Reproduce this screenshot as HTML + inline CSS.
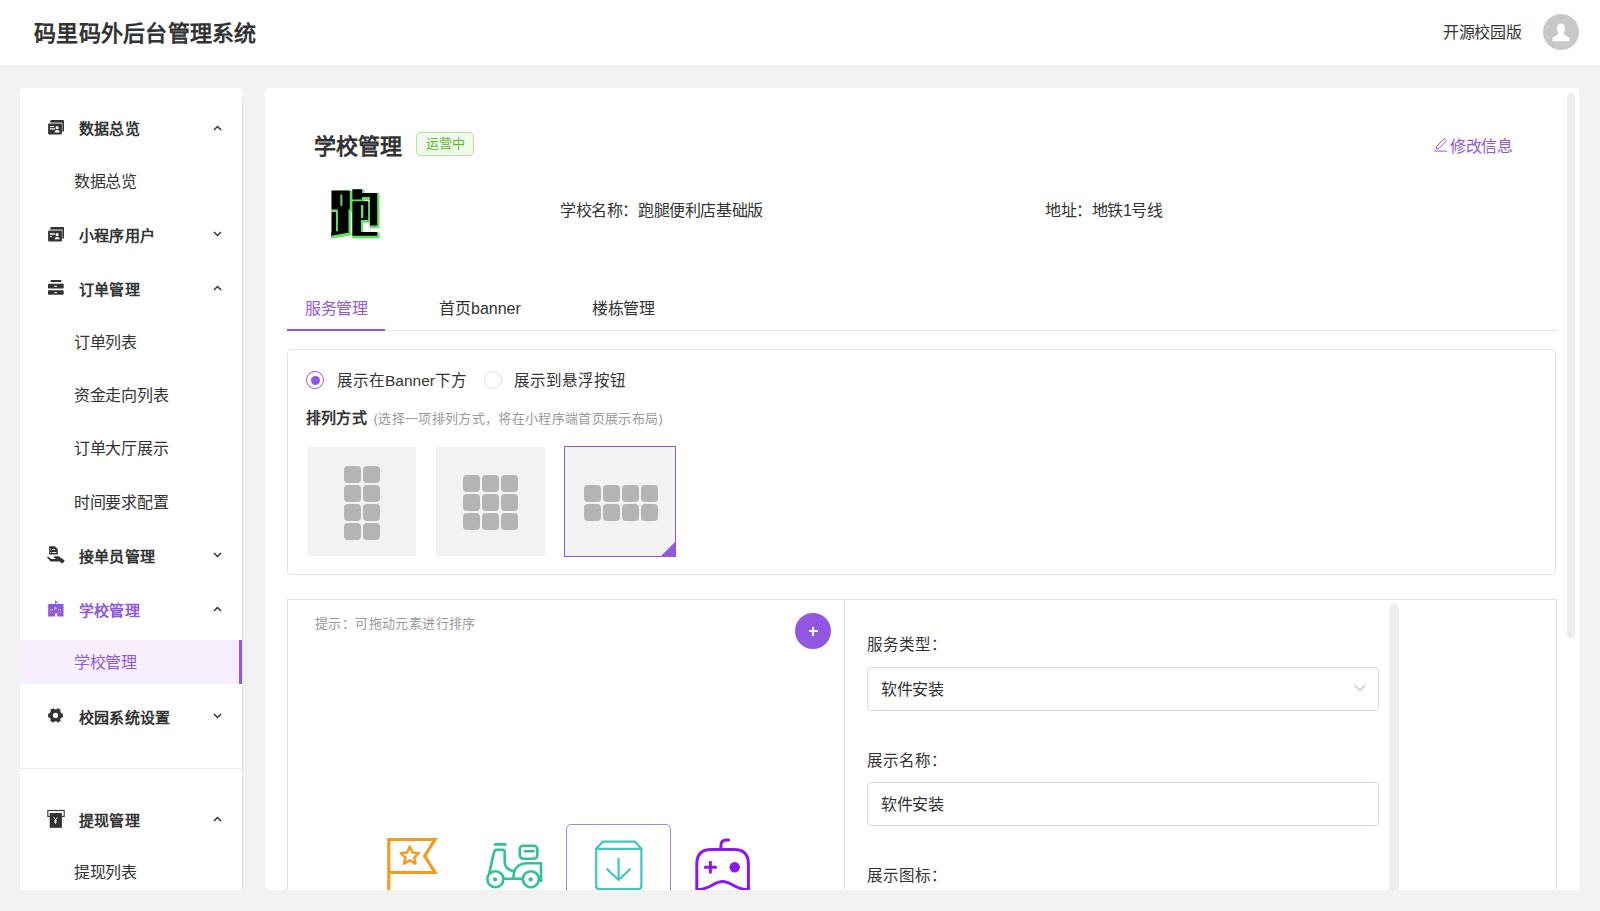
<!DOCTYPE html>
<html lang="zh-CN"><head><meta charset="utf-8">
<style>
*{box-sizing:border-box;margin:0;padding:0}
html,body{width:1600px;height:911px;overflow:hidden}
body{background:#f2f2f2;font-family:"Liberation Sans",sans-serif;color:#333;position:relative}
.a{position:absolute;white-space:nowrap}
#hdr{left:0;top:0;width:1600px;height:65px;background:#fff;box-shadow:0 1px 2px rgba(0,0,0,.02)}
#side{left:20px;top:87px;width:222px;height:803px;overflow:hidden}
.cbg{left:0;top:1px;right:0;bottom:0;background:#fff}
#main{left:265px;top:87px;width:1314px;height:803px;overflow:hidden;border-radius:0 0 4px 4px}
.mh{font-size:15px;letter-spacing:.2px;line-height:20px;font-weight:bold;color:#333}
.ms{font-size:16px;letter-spacing:-.3px;line-height:20px;color:#333}
.pur{color:#9157e0}
.chev{width:9px;height:6px}
.ic{width:24px;height:24px}
.info{font-size:16px;letter-spacing:-.4px;line-height:20px;color:#333}
.opt{width:109px;height:109px;background:#f2f2f2}
.opt.sel{width:112px;height:111px;border:1px solid #9157e0}
.sq{width:17px;height:17px;border-radius:4px;background:#b4b4b4}
.tri{right:-1px;bottom:-1px;width:0;height:0;border-style:solid;border-width:0 0 16px 16px;border-color:transparent transparent #9157e0 transparent}
.logo{font-size:56px;line-height:70px;font-weight:900;color:#000;text-shadow:-2px 2px 0 #5ee05e}
.lbl{font-size:15.5px;line-height:20px;color:#333}
.inp{width:512px;height:44px;border:1px solid #dcdcdc;border-radius:4px;padding-left:13px;font-size:16px;letter-spacing:-.3px;line-height:44px;color:#333}
</style></head><body>

<!-- header -->
<div class="a" id="hdr">
  <div class="a" style="left:34px;top:19px;font-size:22px;line-height:30px;font-weight:bold;color:#333;letter-spacing:.25px">码里码外后台管理系统</div>
  <div class="a" style="left:1443px;top:23px;font-size:16px;line-height:20px;color:#333;letter-spacing:-.3px">开源校园版</div>
  <svg class="a" style="left:1543px;top:14px" width="36" height="36" viewBox="0 0 36 36">
    <circle cx="18" cy="18" r="18" fill="#c8c8c8"/>
    <path d="M18 9.6c2.3 0 4.2 2 4.2 4.7 0 1.9-.8 3.5-1.7 4.6v.9l5.6 3.6c.3.3.5.7.5 1.1v2.7H9.4v-2.7c0-.4.2-.8.5-1.1l5.6-3.6v-.9c-.9-1.1-1.7-2.7-1.7-4.6 0-2.7 1.9-4.7 4.2-4.7z" fill="#fff"/>
  </svg>
</div>

<!-- sidebar -->
<div class="a" style="left:242px;top:99px;width:1px;height:791px;background:#e6e6e6"></div><div class="a" style="left:243px;top:99px;width:1px;height:791px;background:#ededed"></div>
<div class="a" id="side">
  <div class="a cbg" style="border-radius:4px 4px 0 0"></div>
  <!-- 数据总览 -->
  <svg class="a ic" style="left:24px;top:29px" viewBox="0 0 24 24">
    <rect x="6.3" y="4" width="13.7" height="11.8" rx="1" fill="#333"/>
    <rect x="3" y="6.6" width="15.4" height="13" fill="#fff"/>
    <rect x="4.1" y="7.6" width="13.8" height="11" rx="1" fill="#333"/>
    <rect x="5.9" y="10.1" width="4.2" height="1" fill="#fff"/>
    <rect x="5.9" y="12" width="4.9" height="1.7" fill="#fff" opacity=".75"/>
    <circle cx="13.1" cy="11.7" r="1.6" fill="#fff"/>
    <path d="M10.5 16.4c.3-1.5 1.2-2.3 2.6-2.3s2.3.8 2.7 2.3z" fill="#fff"/>
  </svg>
  <div class="a mh" style="left:59px;top:32px">数据总览</div>
  <svg class="a chev" style="left:193px;top:38px" viewBox="0 0 9 6"><path d="M1 5L4.5 1.5 8 5" fill="none" stroke="#333" stroke-width="1.5"/></svg>
  <div class="a ms" style="left:54px;top:85px">数据总览</div>

  <!-- 小程序用户 -->
  <svg class="a ic" style="left:24px;top:135px" viewBox="0 0 24 24">
    <rect x="6.3" y="5" width="13.7" height="11.8" rx="1" fill="#333"/>
    <rect x="3" y="7.6" width="15.4" height="13" fill="#fff"/>
    <rect x="4.1" y="8.6" width="13.8" height="11" rx="1" fill="#333"/>
    <rect x="5.9" y="11" width="4.9" height="2" fill="#fff" opacity=".75"/>
    <rect x="5.9" y="14" width="2" height="1" fill="#fff"/>
    <circle cx="13.1" cy="12.6" r="1.6" fill="#fff"/>
    <path d="M10.5 17.3c.3-1.5 1.2-2.3 2.6-2.3s2.3.8 2.7 2.3z" fill="#fff"/>
  </svg>
  <div class="a mh" style="left:59px;top:139px">小程序用户</div>
  <svg class="a chev" style="left:193px;top:144px" viewBox="0 0 9 6"><path d="M1 1L4.5 4.5 8 1" fill="none" stroke="#333" stroke-width="1.5"/></svg>

  <!-- 订单管理 -->
  <svg class="a ic" style="left:24px;top:190px" viewBox="0 0 24 24">
    <path d="M7 3h10l.6 1.9H6.2z" fill="#333"/>
    <rect x="4" y="6.8" width="15.7" height="4.8" rx="1" fill="#333"/>
    <rect x="10.2" y="8.8" width="2.8" height="1" fill="#fff"/>
    <rect x="4" y="13.2" width="15.7" height="4.6" rx="1" fill="#333"/>
    <rect x="10.2" y="15.2" width="2.8" height="1" fill="#fff"/>
  </svg>
  <div class="a mh" style="left:59px;top:193px">订单管理</div>
  <svg class="a chev" style="left:193px;top:198px" viewBox="0 0 9 6"><path d="M1 5L4.5 1.5 8 5" fill="none" stroke="#333" stroke-width="1.5"/></svg>
  <div class="a ms" style="left:54px;top:246px">订单列表</div>
  <div class="a ms" style="left:54px;top:299px">资金走向列表</div>
  <div class="a ms" style="left:54px;top:352px">订单大厅展示</div>
  <div class="a ms" style="left:54px;top:406px">时间要求配置</div>

  <!-- 接单员管理 -->
  <svg class="a ic" style="left:24px;top:456px" viewBox="0 0 24 24">
    <path d="M5.2 3.2h5.6l3 3v5.4H5.2z" fill="#333"/>
    <rect x="6.3" y="6" width=".9" height=".9" fill="#fff"/>
    <rect x="8" y="6" width="3" height=".9" fill="#fff"/>
    <rect x="6.3" y="9" width=".9" height=".9" fill="#fff"/>
    <rect x="8" y="9" width="4.3" height=".9" fill="#fff"/>
    <path d="M3 14.3l1-.9 3.2 2.7h5.2l-2.6-1.5.6-1.4h4.3l6 4.2-2 3-3.4-2H6.5z" fill="#333"/>
  </svg>
  <div class="a mh" style="left:59px;top:460px">接单员管理</div>
  <svg class="a chev" style="left:193px;top:465px" viewBox="0 0 9 6"><path d="M1 1L4.5 4.5 8 1" fill="none" stroke="#333" stroke-width="1.5"/></svg>

  <!-- 学校管理 -->
  <svg class="a ic" style="left:24px;top:510px" viewBox="0 0 24 24">
    <path d="M11.1 3.4h.8v.9l3 .8-3 .9v1.1h7.6v2.5l.4 1.2h-.4V19l.4.6h-6.7V17.2q0-1.2-1.05-1.2t-1.05 1.2v2.4H3.3l.9-.6V10.8h-.9l.9-1.2V7.1h6.9z" fill="#9157e0"/>
    <circle cx="11.4" cy="11.3" r="1.2" fill="#fff" opacity=".6"/>
    <g fill="#fff" opacity=".75">
      <rect x="6.3" y="12.1" width=".8" height="1.6"/><rect x="8.2" y="12.1" width=".8" height="1.6"/>
      <rect x="14.2" y="12.1" width=".8" height="1.6"/><rect x="16.1" y="12.1" width=".8" height="1.6"/>
      <rect x="6.3" y="15" width=".8" height=".8"/><rect x="8.2" y="15" width=".8" height=".8"/>
      <rect x="14.2" y="15" width=".8" height=".8"/><rect x="16.1" y="15" width=".8" height=".8"/>
    </g>
  </svg>
  <div class="a mh pur" style="left:59px;top:514px">学校管理</div>
  <svg class="a chev" style="left:193px;top:519px" viewBox="0 0 9 6"><path d="M1 5L4.5 1.5 8 5" fill="none" stroke="#333" stroke-width="1.5"/></svg>
  <div class="a" style="left:0;top:553px;width:222px;height:44px;background:#f7effd"></div>
  <div class="a" style="left:219px;top:553px;width:3px;height:44px;background:#9157e0"></div>
  <div class="a ms pur" style="left:54px;top:566px">学校管理</div>

  <!-- 校园系统设置 -->
  <svg class="a ic" style="left:24px;top:617px" viewBox="0 0 24 24"><g fill="#333"><rect x="15.70" y="9.4" width="3.2" height="4" rx=".6" transform="rotate(0 11.5 11.4)"/><rect x="15.70" y="9.4" width="3.2" height="4" rx=".6" transform="rotate(60 11.5 11.4)"/><rect x="15.70" y="9.4" width="3.2" height="4" rx=".6" transform="rotate(120 11.5 11.4)"/><rect x="15.70" y="9.4" width="3.2" height="4" rx=".6" transform="rotate(180 11.5 11.4)"/><rect x="15.70" y="9.4" width="3.2" height="4" rx=".6" transform="rotate(240 11.5 11.4)"/><rect x="15.70" y="9.4" width="3.2" height="4" rx=".6" transform="rotate(300 11.5 11.4)"/><circle cx="11.5" cy="11.4" r="6.2"/></g><circle cx="11.5" cy="11.4" r="2.6" fill="#fff"/></svg>
  <div class="a mh" style="left:59px;top:621px">校园系统设置</div>
  <svg class="a chev" style="left:193px;top:626px" viewBox="0 0 9 6"><path d="M1 1L4.5 4.5 8 1" fill="none" stroke="#333" stroke-width="1.5"/></svg>

  <div class="a" style="left:0;top:681px;width:222px;height:1px;background:#ebebeb"></div>

  <!-- 提现管理 -->
  <svg class="a ic" style="left:24px;top:719px" viewBox="0 0 24 24">
    <rect x="3.8" y="4.5" width="16.4" height="5.9" fill="none" stroke="#333" stroke-width="1.1"/>
    <rect x="5.7" y="7" width="12.2" height="14.8" fill="#333"/>
    <path d="M9.6 11.2l1.9 2.6 1.9-2.6M11.5 13.8v4M10 14.6h3M10 16.1h3" fill="none" stroke="#fff" stroke-width=".8"/>
  </svg>
  <div class="a mh" style="left:59px;top:724px">提现管理</div>
  <svg class="a chev" style="left:193px;top:729px" viewBox="0 0 9 6"><path d="M1 5L4.5 1.5 8 5" fill="none" stroke="#333" stroke-width="1.5"/></svg>
  <div class="a ms" style="left:54px;top:776px">提现列表</div>
</div>

<!-- main -->
<div class="a" id="main">
  <div class="a cbg" style="border-radius:4px"></div>
  <div class="a" style="left:49px;top:45px;font-size:22px;line-height:30px;font-weight:bold;color:#333">学校管理</div>
  <div class="a" style="left:151px;top:45px;width:58px;height:24px;border:1px solid #b9e3a5;background:#f0f9eb;border-radius:4px;color:#5fb92f;font-size:13px;line-height:22px;text-align:center">运营中</div>
  <svg class="a" style="left:55px;top:93px" width="70" height="70" viewBox="0 0 70 70">
    <path d="M11.60 10.60H29.80V29.40H11.60ZM17.90 29.40H28.50V52.60H17.90ZM11.60 31.90 L16.00 31.90 L16.00 53.80 L11.60 54.73ZM11.60 51.27 L28.50 51.27 L29.20 52.60 L10.99 55.70ZM32.40 9.20H42.10V19.50H32.40ZM42.10 12.90H57.20V17.10H42.10ZM49.90 12.90H57.20V45.50H49.90ZM32.40 21.30H40.90V55.70H32.40ZM32.40 21.30H48.10V25.00H32.40ZM43.30 21.30H48.10V40.00H43.30ZM40.90 37.90H48.10V40.00H40.90ZM32.40 52.10H57.20V55.70H32.40Z" fill="#62e462" stroke="#62e462" stroke-width="2.6" stroke-linejoin="round" transform="translate(1 1.5)"/>
    <path d="M11.60 10.60H29.80V29.40H11.60ZM17.90 29.40H28.50V52.60H17.90ZM11.60 31.90 L16.00 31.90 L16.00 53.80 L11.60 54.73ZM11.60 51.27 L28.50 51.27 L29.20 52.60 L10.99 55.70ZM32.40 9.20H42.10V19.50H32.40ZM42.10 12.90H57.20V17.10H42.10ZM49.90 12.90H57.20V45.50H49.90ZM32.40 21.30H40.90V55.70H32.40ZM32.40 21.30H48.10V25.00H32.40ZM43.30 21.30H48.10V40.00H43.30ZM40.90 37.90H48.10V40.00H40.90ZM32.40 52.10H57.20V55.70H32.40Z" fill="#000"/>
    <path d="M20.40 14.40H22.30V25.70H20.40Z" fill="#62e462"/>
  </svg>
  <div class="a info" style="left:295px;top:114px">学校名称：跑腿便利店基础版</div>
  <div class="a info" style="left:780px;top:114px">地址：地铁1号线</div>
  <svg class="a" style="left:1168px;top:50px" width="16" height="16" viewBox="0 0 16 16">
    <path d="M3 12.2l.6-2.8 7.2-7.2a.9.9 0 0 1 1.3 0l.9.9a.9.9 0 0 1 0 1.3L5.8 11.6z" fill="none" stroke="#9157e0" stroke-width="1"/>
    <rect x="1.5" y="13.6" width="12.6" height="1" fill="#9157e0"/>
  </svg>
  <div class="a pur" style="left:1185px;top:50px;font-size:16px;line-height:20px;letter-spacing:-.3px">修改信息</div>

  <div class="a pur" style="left:40px;top:212px;font-size:16px;line-height:20px;letter-spacing:-.3px">服务管理</div>
  <div class="a" style="left:174px;top:212px;font-size:16px;line-height:20px;color:#333">首页banner</div>
  <div class="a" style="left:327px;top:212px;font-size:16px;line-height:20px;color:#333;letter-spacing:-.3px">楼栋管理</div>
  <div class="a" style="left:22px;top:243px;width:1270px;height:1px;background:#e4e7ed"></div>
  <div class="a" style="left:22px;top:242px;width:98px;height:2px;background:#9157e0"></div>

  <div class="a" style="left:22px;top:262px;width:1269px;height:226px;border:1px solid #e4e4e4;border-radius:4px"></div>
  <div class="a" style="left:41px;top:284px;width:18px;height:18px;border:1px solid #9157e0;border-radius:50%"></div>
  <div class="a" style="left:45.5px;top:288.5px;width:9px;height:9px;background:#9157e0;border-radius:50%"></div>
  <div class="a" style="left:72px;top:284px;font-size:15.5px;line-height:20px;color:#333">展示在Banner下方</div>
  <div class="a" style="left:219px;top:284px;width:18px;height:18px;border:1px solid #dcdfe6;border-radius:50%"></div>
  <div class="a" style="left:249px;top:284px;font-size:15.5px;line-height:20px;color:#333">展示到悬浮按钮</div>
  <div class="a" style="left:41px;top:321px;font-size:15px;letter-spacing:.2px;line-height:20px;font-weight:bold;color:#333">排列方式</div>
  <div class="a" style="left:108.5px;top:322px;font-size:13px;letter-spacing:.35px;line-height:20px;color:#999">(选择一项排列方式，将在小程序端首页展示布局)</div>
  <div class="a opt" style="left:42px;top:360px"><div class="a sq" style="left:36.5px;top:19.0px"></div><div class="a sq" style="left:55.5px;top:19.0px"></div><div class="a sq" style="left:36.5px;top:38.0px"></div><div class="a sq" style="left:55.5px;top:38.0px"></div><div class="a sq" style="left:36.5px;top:57.0px"></div><div class="a sq" style="left:55.5px;top:57.0px"></div><div class="a sq" style="left:36.5px;top:76.0px"></div><div class="a sq" style="left:55.5px;top:76.0px"></div></div>
  <div class="a opt" style="left:171px;top:360px"><div class="a sq" style="left:27.0px;top:27.5px"></div><div class="a sq" style="left:46.0px;top:27.5px"></div><div class="a sq" style="left:65.0px;top:27.5px"></div><div class="a sq" style="left:27.0px;top:46.5px"></div><div class="a sq" style="left:46.0px;top:46.5px"></div><div class="a sq" style="left:65.0px;top:46.5px"></div><div class="a sq" style="left:27.0px;top:65.5px"></div><div class="a sq" style="left:46.0px;top:65.5px"></div><div class="a sq" style="left:65.0px;top:65.5px"></div></div>
  <div class="a opt sel" style="left:299px;top:359px"><div class="a sq" style="left:18.5px;top:38.0px"></div><div class="a sq" style="left:37.5px;top:38.0px"></div><div class="a sq" style="left:56.5px;top:38.0px"></div><div class="a sq" style="left:75.5px;top:38.0px"></div><div class="a sq" style="left:18.5px;top:57.0px"></div><div class="a sq" style="left:37.5px;top:57.0px"></div><div class="a sq" style="left:56.5px;top:57.0px"></div><div class="a sq" style="left:75.5px;top:57.0px"></div><div class="a tri"></div></div>

  <div class="a" style="left:22px;top:512px;width:1270px;height:400px;border:1px solid #e4e4e4;border-bottom:0"></div>
  <div class="a" style="left:579px;top:513px;width:1px;height:300px;background:#e4e4e4"></div>
  <div class="a" style="left:50px;top:527px;font-size:13px;letter-spacing:.4px;line-height:20px;color:#999">提示：可拖动元素进行排序</div>
  <div class="a" style="left:530px;top:526px;width:36px;height:36px;border-radius:50%;background:#9157e0"></div>
  <div class="a" style="left:543.5px;top:543px;width:9px;height:2px;background:#fff"></div>
  <div class="a" style="left:547px;top:539.5px;width:2px;height:9px;background:#fff"></div>


  <svg class="a" style="left:115px;top:745px" width="64" height="60" viewBox="0 0 64 60">
    <path d="M8.8 60V7.5H55L44.6 24 55 40.5H8.8" fill="none" stroke="#f29b1f" stroke-width="3.2" stroke-linejoin="miter"/>
    <path d="M29.8 14.5l2.8 6 6.4.6-4.8 4.3 1.4 6.3-5.8-3.3-5.8 3.3 1.4-6.3-4.8-4.3 6.4-.6z" fill="none" stroke="#f29b1f" stroke-width="2.4" stroke-linejoin="round"/>
  </svg>
  <svg class="a" style="left:215px;top:748px" width="70" height="60" viewBox="0 0 70 60">
    <g fill="none" stroke="#2fc48f" stroke-width="2.6" stroke-linecap="round" stroke-linejoin="round">
      <circle cx="15.4" cy="44.2" r="8"/>
      <circle cx="50.9" cy="44.2" r="8"/>
      <path d="M15 9.4h10.4"/>
      <rect x="39.8" y="10.7" width="17.5" height="13.1" rx="3.5"/>
      <path d="M44.8 16.3h8.8"/>
      <path d="M9.4 37.5L13.9 17.6Q14.5 14.8 17 14.8H22.4Q24.7 14.8 24.7 17.6V26.5Q24.7 34.6 34.3 36.2"/>
      <path d="M34.3 36.2L33.2 43.5"/>
      <path d="M23.4 43.8H42.9"/>
      <path d="M34.3 36.2Q37.5 28.2 47 28.2H61V46"/>
    </g>
    <circle cx="15.1" cy="44.4" r="2.1" fill="#2fc48f"/>
    <circle cx="50.7" cy="44.4" r="2.1" fill="#2fc48f"/>
  </svg>
  <div class="a" style="left:301px;top:737px;width:105px;height:200px;border:1px solid #a583e2;border-radius:5px"></div>
  <svg class="a" style="left:325px;top:748px" width="58" height="60" viewBox="0 0 58 60">
    <g fill="none" stroke="#3cc6c6" stroke-width="2.2" stroke-linecap="round" stroke-linejoin="round">
      <path d="M6.2 13.8L12.8 6.6H44.8L51.4 13.8Z"/>
      <path d="M6.2 13.8V51Q6.2 54 9.2 54H48.4Q51.4 54 51.4 51V13.8"/>
      <path d="M28.6 23.8V45M17.2 34.2L28.6 45 40 34.2"/>
    </g>
  </svg>
  <svg class="a" style="left:425px;top:748px" width="66" height="60" viewBox="0 0 66 60">
    <g fill="none" stroke="#8e17ee" stroke-width="3" stroke-linecap="round" stroke-linejoin="round">
      <path d="M30.9 14.6V10.5Q30.9 4.9 36.5 4.9H38.6"/>
      <path d="M7.5 54.6C20 54.6 24 46.4 32.6 46.4S45.2 54.6 57.7 54.6"/>
      <path d="M6.8 58V29Q6.8 14.6 21.3 14.6H43.9Q58.4 14.6 58.4 29V58"/>
      <path d="M20.4 27.2v10M15.2 32.2h10.4"/>
    </g>
    <circle cx="44.7" cy="32.2" r="5.2" fill="#8e17ee"/>
  </svg>
  <div class="a lbl" style="left:602px;top:548px">服务类型：</div>
  <div class="a inp" style="left:602px;top:580px">软件安装</div>
  <svg class="a" style="left:1089px;top:597px" width="12" height="8" viewBox="0 0 12 8"><path d="M1 1.5l5 5 5-5" fill="none" stroke="#c0c4cc" stroke-width="1.2"/></svg>
  <div class="a lbl" style="left:602px;top:664px">展示名称：</div>
  <div class="a inp" style="left:602px;top:695px">软件安装</div>
  <div class="a lbl" style="left:602px;top:779px">展示图标：</div>
  <div class="a" style="left:1124px;top:517px;width:10px;height:300px;border-radius:5px;background:#ededed"></div>

  <div class="a" style="left:1302px;top:6px;width:8px;height:545px;border-radius:4px;background:#ededed"></div>
</div>

</body></html>
